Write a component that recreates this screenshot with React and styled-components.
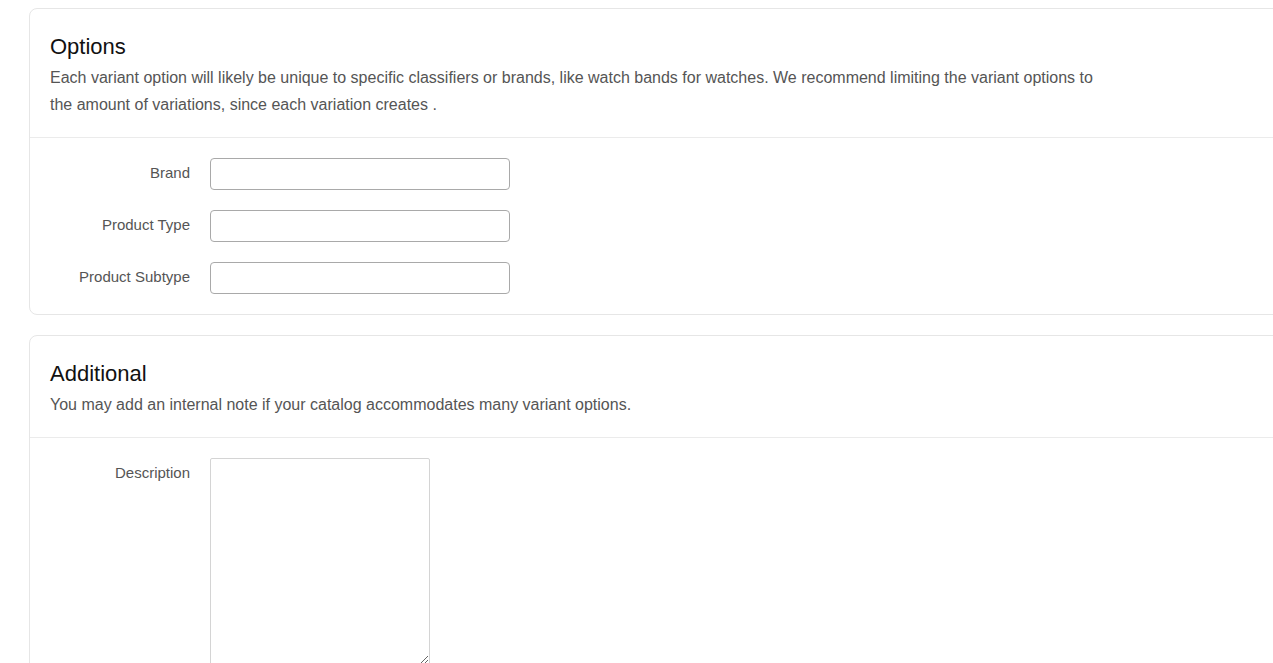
import React from "react";
import styled, { createGlobalStyle } from "styled-components";

const GlobalStyle = createGlobalStyle`
  html, body {
    margin: 0;
    padding: 0;
    background: #fff;
    overflow: hidden;
  }
  body {
    font-family: "Liberation Sans", Arial, sans-serif;
  }
`;

const Page = styled.div`
  padding: 8px 0 0 29px;
  display: flex;
  flex-direction: column;
  gap: 20px;
`;

const Card = styled.section`
  width: 1300px;
  border: 1px solid #e6e6e6;
  border-radius: 8px;
  background: #fff;
`;

const Header = styled.div`
  padding: 25px 20px 19px;
  border-bottom: 1px solid #ebebeb;
`;

const Title = styled.h2`
  margin: 0;
  font-size: 22px;
  line-height: 26px;
  font-weight: 400;
  color: #111;
`;

const Lead = styled.p`
  margin: 4px 0 0;
  max-width: 1060px;
  font-size: 16px;
  line-height: 27px;
  color: #555;
`;

const Body = styled.div`
  padding: 20px 0;
  display: flex;
  flex-direction: column;
  gap: 20px;
`;

const Row = styled.div`
  display: grid;
  grid-template-columns: 160px auto;
  column-gap: 20px;
  align-items: start;
`;

const Label = styled.label`
  text-align: right;
  font-size: 15px;
  line-height: 18px;
  padding-top: 6px;
  color: #555;
`;

const Input = styled.input`
  width: 300px;
  height: 32px;
  box-sizing: border-box;
  border: 1px solid #a9a9a9;
  border-radius: 4px;
  background: #fff;
  font: inherit;
`;

const TextArea = styled.textarea`
  width: 220px;
  height: 207px;
  box-sizing: border-box;
  border: 1px solid #d4d4d4;
  border-radius: 2px;
  background: #fff;
  font: inherit;
`;

const fields = ["Brand", "Product Type", "Product Subtype"];

const App = () => {
  return (
    <>
      <GlobalStyle />
      <Page>
        <Card>
          <Header>
            <Title>Options</Title>
            <Lead>
              Each variant option will likely be unique to specific classifiers or brands, like watch
              bands for watches. We recommend limiting the variant options to the amount of
              variations, since each variation creates .
            </Lead>
          </Header>
          <Body>
            {fields.map((f) => (
              <Row key={f}>
                <Label>{f}</Label>
                <Input type="text" />
              </Row>
            ))}
          </Body>
        </Card>

        <Card>
          <Header>
            <Title>Additional</Title>
            <Lead>You may add an internal note if your catalog accommodates many variant options.</Lead>
          </Header>
          <Body>
            <Row>
              <Label>Description</Label>
              <TextArea />
            </Row>
          </Body>
        </Card>
      </Page>
    </>
  );
};

export default App;
